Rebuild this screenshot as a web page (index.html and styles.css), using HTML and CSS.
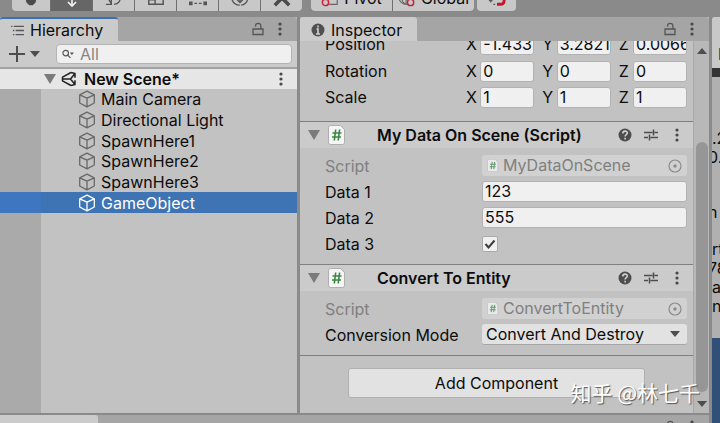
FILE: index.html
```
<!DOCTYPE html>
<html lang="en">
<head>
<meta charset="utf-8">
<title>Editor</title>
<link rel="stylesheet" href="styles.css">
</head>
<body>
<svg class="defs" aria-hidden="true">
  <symbol id="cube" viewBox="0 0 18 18"><path d="M9 1.2 16.3 4.8V13L9 16.8 1.700 13V4.800ZM1.700 4.800 9 8.200 16.300 4.800M9 8.200V16.800" fill="none" stroke="currentColor" stroke-width="1.300" stroke-linejoin="round"/></symbol>
  <symbol id="lock" viewBox="0 0 14 14"><path d="M2 7h10v5.500H2zM4.500 4.500V4a2.700 2.700 0 0 1 5.400 0v3" fill="none" stroke="currentColor" stroke-width="1.300"/></symbol>
  <symbol id="dots" viewBox="0 0 6 14"><g fill="currentColor"><circle cx="3" cy="2" r="1.600"/><circle cx="3" cy="7" r="1.600"/><circle cx="3" cy="12" r="1.600"/></g></symbol>
  <symbol id="fold" viewBox="0 0 12 10"><path d="M0 0h12L6 10z" fill="currentColor"/></symbol>
  <symbol id="down" viewBox="0 0 10 6"><path d="M0 0h10L5 6z" fill="currentColor"/></symbol>
  <symbol id="script" viewBox="0 0 18 20"><path d="M2.500.5h10l4 4v13a2 2 0 0 1-2 2h-12a2 2 0 0 1-2-2v-15a2 2 0 0 1 2-2z" fill="#f4f5f4" stroke="#a2a2a2" stroke-width=".8"/><path d="M7.700 4.500 6.300 15.500M11.600 4.500l-1.400 11M4.500 8h9M4 12h9" fill="none" stroke="#3b8546" stroke-width="1.600"/></symbol>
  <symbol id="help" viewBox="0 0 14 14"><circle cx="7" cy="7" r="6.500" fill="#4d4d4d"/><path d="M4.800 5.500c0-3.200 4.600-3 4.600-.4 0 1.500-2.300 1.500-2.300 3.300M7.100 9.700v1.700" fill="none" stroke="#d0d0d0" stroke-width="1.600"/></symbol>
  <symbol id="preset" viewBox="0 0 14 14"><path d="M0 4.500h8.500M10.500 4.500H14M0 9.500h4M6.500 9.500H14M9.500 1.500v6M5.500 6.500v6" fill="none" stroke="#4d4d4d" stroke-width="1.500"/></symbol>
  <symbol id="target" viewBox="0 0 14 14"><circle cx="7" cy="7" r="6" fill="none" stroke="#8c8c8c" stroke-width="1.200"/><circle cx="7" cy="7" r="1.700" fill="#8c8c8c"/></symbol>
</svg>

<header class="toolbar">
  <div class="group tools">
    <button aria-label="Hand"><svg viewBox="0 0 20 20"><path d="M3 8h14l-2 7-3 3H8l-3-3z" fill="#4b4b4b"/></svg></button>
    <button class="on" aria-label="Move"><svg viewBox="0 0 20 20"><path d="M10 1v17M5.500 14.500 10 19l4.500-4.500M1 10h18" fill="none" stroke="#f2f2f2" stroke-width="1.800"/></svg></button>
    <button aria-label="Rotate"><svg viewBox="0 0 20 20"><path d="M4 10c0 4 3 4 3 7H1M7 17v-6M16 8c2 5-1 9-6 9" fill="none" stroke="#555" stroke-width="1.500"/></svg></button>
    <button aria-label="Scale"><svg viewBox="0 0 20 20"><path d="M2 2h16v15H2zM2 12h7v5" fill="none" stroke="#555" stroke-width="1.600"/></svg></button>
    <button aria-label="Rect"><svg viewBox="0 0 20 20"><path d="M2 3v9M18 3v9M6 16h8" fill="none" stroke="#555" stroke-width="1.400" stroke-dasharray="3 2"/><path d="M0 14h4v4H0zM16 14h4v4h-4z" fill="#555"/></svg></button>
    <button aria-label="Transform"><svg viewBox="0 0 20 20"><path d="M1 11c1 4 4 7 9 7s8-3 9-8M10 4v11M6.500 11.500 10 15l3.500-3.500" fill="none" stroke="#555" stroke-width="1.500" stroke-dasharray="12 1.500"/></svg></button>
    <button aria-label="Custom"><svg viewBox="0 0 20 20"><path d="m2 18 8-8M10 10l8 8" fill="none" stroke="#4b4b4b" stroke-width="4"/></svg></button>
  </div>
  <div class="group modes">
    <button><svg viewBox="0 0 20 20"><path d="M6 3h12v14H9" fill="none" stroke="#666" stroke-width="1.300"/><circle cx="5" cy="15" r="3.500" fill="none" stroke="#c8233a" stroke-width="1.600"/></svg>Pivot</button>
    <button><svg viewBox="0 0 20 20"><circle cx="9" cy="9" r="8" fill="none" stroke="#666" stroke-width="1.300"/><path d="M1 11h17M9 1v16M5 2c-3 5-1 12 3 15" fill="none" stroke="#666" stroke-width="1.200"/><circle cx="14" cy="15" r="3.500" fill="#c8c8c8" stroke="#c8233a" stroke-width="1.600"/></svg>Global</button>
  </div>
  <div class="group snap">
    <button aria-label="Snap"><svg viewBox="0 0 20 20"><path d="M10 17h4q4 0 4-5V8" fill="none" stroke="#c8142e" stroke-width="3.200"/><path d="M1 13h4M3 11v4M6 17h2" stroke="#555" stroke-width="1.300"/></svg></button>
  </div>
</header>

<div class="workspace">
  <div class="docks">
    <main class="main">
      <section class="panel hierarchy">
        <div class="tabs">
          <h2 class="tab focus"><svg class="list" viewBox="0 0 14 12"><path d="M3 1.500h11M5 6h9M5 10.500h9M0 1.500h1.500M2 6h1.500M2 10.500h1.500" stroke="#555" stroke-width="1.400"/></svg>Hierarchy</h2>
          <svg class="i14"><use href="#lock"/></svg><svg class="dots"><use href="#dots"/></svg>
        </div>
        <div class="filter">
          <button class="add" aria-label="Create"><svg class="plus" viewBox="0 0 16 16"><path d="M8 0v16M0 8h16" stroke="#4d4d4d" stroke-width="2"/></svg><svg class="down"><use href="#down"/></svg></button>
          <label class="search"><svg viewBox="0 0 13 10"><circle cx="4" cy="4" r="3" fill="none" stroke="#555" stroke-width="1.300"/><path d="m6.200 6.200 3 3" stroke="#555" stroke-width="1.300"/><path d="M8.500 3.500H13L10.700 6z" fill="#555"/></svg><input type="text" placeholder="All" aria-label="Search"></label>
        </div>
        <div class="scene">
          <svg class="fold"><use href="#fold"/></svg>
          <svg class="unity" viewBox="0 0 16 16"><path d="M10 1.500 1.500 6.200v3.600l8.500 4.700M10 1.500l4 1v4.300M10 14.500l4-1V9.200M14 2.500 9.500 8l4.500 5.500M1.500 8h8" fill="none" stroke="#222" stroke-width="1.500" stroke-linejoin="round"/></svg>
          <strong>New Scene*</strong>
          <svg class="dots"><use href="#dots"/></svg>
        </div>
        <ul class="tree">
          <li><svg><use href="#cube"/></svg>Main Camera</li>
          <li><svg><use href="#cube"/></svg>Directional Light</li>
          <li><svg><use href="#cube"/></svg>SpawnHere1</li>
          <li><svg><use href="#cube"/></svg>SpawnHere2</li>
          <li><svg><use href="#cube"/></svg>SpawnHere3</li>
          <li class="selected"><svg><use href="#cube"/></svg>GameObject</li>
        </ul>
        <div class="gutter"></div>
      </section>

      <section class="panel inspector">
        <div class="tabs">
          <h2 class="tab"><svg class="i14" viewBox="0 0 14 14"><circle cx="7" cy="7" r="6.500" fill="#505050"/><path d="M7 2.500v2M5.500 6H7v5M5 11h4" fill="none" stroke="#d0d0d0" stroke-width="1.600"/></svg>Inspector</h2>
          <svg class="i14"><use href="#lock"/></svg><svg class="dots"><use href="#dots"/></svg>
        </div>
        <div class="view">
          <div class="content">
            <div class="transform">
              <div class="vector cut"><span>Position</span><label>X<input type="text" value="-1.433"></label><label>Y<input type="text" value="3.2821"></label><label>Z<input type="text" value="0.0066"></label></div>
              <div class="vector"><span>Rotation</span><label>X<input type="text" value="0"></label><label>Y<input type="text" value="0"></label><label>Z<input type="text" value="0"></label></div>
              <div class="vector"><span>Scale</span><label>X<input type="text" value="1"></label><label>Y<input type="text" value="1"></label><label>Z<input type="text" value="1"></label></div>
            </div>

            <div class="title"><svg class="fold"><use href="#fold"/></svg><svg class="script"><use href="#script"/></svg><h3>My Data On Scene (Script)</h3><svg class="i14"><use href="#help"/></svg><svg class="i14"><use href="#preset"/></svg><svg class="dots"><use href="#dots"/></svg></div>
            <div class="fields">
              <div class="row off"><label for="s1">Script</label><span class="object"><svg class="mini" viewBox="0 0 18 20"><use href="#script"/></svg><input id="s1" type="text" value="MyDataOnScene" disabled><svg class="i14"><use href="#target"/></svg></span></div>
              <div class="row"><label for="d1">Data 1</label><input id="d1" type="text" value="123"></div>
              <div class="row"><label for="d2">Data 2</label><input id="d2" type="text" value="555"></div>
              <div class="row"><label for="d3">Data 3</label><span class="check"><input id="d3" type="checkbox" checked><svg viewBox="0 0 16 16"><path d="m3.500 8 3 3.500 6-7" fill="none" stroke="#3c3c3c" stroke-width="2"/></svg></span></div>
            </div>

            <div class="title"><svg class="fold"><use href="#fold"/></svg><svg class="script"><use href="#script"/></svg><h3>Convert To Entity</h3><svg class="i14"><use href="#help"/></svg><svg class="i14"><use href="#preset"/></svg><svg class="dots"><use href="#dots"/></svg></div>
            <div class="fields">
              <div class="row off"><label for="s2">Script</label><span class="object"><svg class="mini" viewBox="0 0 18 20"><use href="#script"/></svg><input id="s2" type="text" value="ConvertToEntity" disabled><svg class="i14"><use href="#target"/></svg></span></div>
              <div class="row"><label for="cm">Conversion Mode</label><span class="pick"><select id="cm"><option>Convert And Destroy</option></select><svg class="down"><use href="#down"/></svg></span></div>
            </div>
            <div class="actions"><button>Add Component</button></div>
          </div>
          <div class="scrollbar"><svg class="down up"><use href="#down"/></svg><div class="thumb"></div><svg class="down"><use href="#down"/></svg></div>
        </div>
      </section>
    </main>
    <footer class="bottom"><div class="bottom-tab"></div><svg class="i14"><use href="#lock"/></svg><svg class="dots"><use href="#dots"/></svg></footer>
  </div>
  <aside class="side">
    <div class="side-tab">I</div>
    <div class="side-bar"></div>
    <div class="side-text"><p>.2</p><p class="back">0.</p><p class="break back">n :</p><p class="break">rt</p><p class="back">78</p><p>a</p><p>n</p></div>
    <div class="side-view"></div>
  </aside>
</div>
<div class="watermark" lang="zh">知乎 @林七千</div>
</body>
</html>
```
FILE: styles.css
```
* { box-sizing: border-box; }
body {
  margin: 0;
  height: 100vh;
  display: flex;
  flex-direction: column;
  overflow: hidden;
  background: #8a8a8a;
  color: #0c0c0c;
  font: 16px/20px Inter, "Noto Sans CJK SC", sans-serif;
}
svg { display: block; flex: none; overflow: visible; }
button, input, select { font: inherit; color: inherit; border: 0; margin: 0; padding: 0; background: none; }
h2, h3, ul, p { margin: 0; padding: 0; font: inherit; }
.defs { position: absolute; width: 0; height: 0; }

.i14, .dots { width: 14px; height: 14px; color: #555; }
.dots { color: #484848; }
.down { width: 10px; height: 6px; color: #4d4d4d; }
.fold { width: 12px; height: 10px; color: #7b7b7b; }

.toolbar {
  height: 17px;
  display: flex;
  align-items: flex-end;
  padding: 0 12px 6px;
}
.group { display: flex; gap: 1px; border-radius: 4px; overflow: hidden; background: #707070; }
.group button { height: 26px; display: flex; align-items: center; justify-content: center; gap: 5px; background: #c8c8c8; }
.group button.on { background: #666; }
.group svg { width: 18px; height: 18px; }
.tools button { width: 41px; }
.tools { margin-right: 9px; }
.tools button:first-child { width: 38px; }
.modes { margin-right: 3px; }
.modes button { width: 81px; }
.snap button { width: 39px; }

.workspace { flex: 1; display: flex; gap: 3px; min-height: 0; }
.docks { flex: 1; display: flex; flex-direction: column; gap: 2px; min-width: 0; }
.main { flex: 1; display: grid; grid-template-columns: 297fr 409fr; gap: 3px; min-height: 0; }
.panel { display: flex; flex-direction: column; min-width: 0; min-height: 0; background: #c2c2c2; overflow: hidden; }

.tabs { flex: none; height: 24px; display: flex; align-items: center; gap: 8px; padding-right: 10px; background: #a5a5a5; border-radius: 0 3px 0 0; }
.tab { height: 24px; display: flex; align-items: center; gap: 6px; padding: 2px 15px 0 11px; margin-right: auto; background: #cbcbcb; border-radius: 3px 3px 0 0; }
.focus { border-top: 2px solid #3a72b0; padding-top: 0; }
.list { width: 13px; height: 11px; }
.filter { flex: none; height: 28px; display: flex; align-items: center; gap: 16px; padding: 0 5px 0 9px; background: #cbcbcb; border-bottom: 2px solid #a2a2a2; }
.add { display: flex; align-items: center; gap: 5px; }
.plus { width: 16px; height: 16px; }
.search { flex: 1; min-width: 0; height: 20px; display: flex; align-items: center; gap: 6px; padding-left: 5px; background: #f0f0f0; border: 1px solid #b4b4b4; border-radius: 4px; }
.search svg { width: 12px; height: 10px; }
.search input { flex: 1; min-width: 0; height: 18px; }
.search input::placeholder { color: #858585; }

.scene { flex: none; height: 20px; display: flex; align-items: center; gap: 5px; padding: 0 9px 0 44px; background: #e6e6e6; }
.unity { width: 16px; height: 16px; }
.scene strong { flex: 1; padding-left: 2px; font-weight: 600; }
.tree { flex: none; height: 124px; display: grid; grid-auto-rows: 1fr; list-style: none; }
.tree li { display: flex; align-items: center; gap: 5px; padding-left: 37px; border-left: 41px solid #aaa; }
.tree svg { width: 18px; height: 18px; color: #686868; }
.tree .selected { background: #3e74b4; border-color: #3e76c0; color: #fff; }
.tree .selected svg { color: #fff; }
.gutter { flex: 1; border-left: 41px solid #aaa; }

.view { flex: 1; display: flex; min-height: 0; }
.content { flex: 1; min-width: 0; }
.transform { height: 80px; display: flex; flex-direction: column; gap: 5px; overflow: hidden; }
.vector { flex: none; display: flex; gap: 8px; height: 21px; line-height: 21px; padding: 0 6px 0 25px; }
.vector.cut { height: 14px; align-items: flex-end; margin-bottom: 1px; }
.vector span { width: 133px; }
.vector label { flex: 1; display: flex; min-width: 0; }
input[type="text"] { height: 21px; line-height: 21px; }
.vector input, .row > input { padding: 0 2px; background: #f0f0f0; border: 1px solid #b2b2b2; border-radius: 3px; }
.vector input { margin-left: auto; width: 54px; padding: 0 0 0 2px; }

.title { height: 27px; display: flex; align-items: center; gap: 12px; padding: 0 9px 0 8px; border-top: 1px solid #7f7f7f; background: #cbcbcb; }
.title .fold { margin-right: -4px; }
.script { width: 18px; height: 20px; }
.title h3 { flex: 1; padding-left: 19px; font-weight: 600; }
.fields { display: grid; gap: 5px; padding: 7px 6px 10px 25px; }
.row { display: grid; grid-template-columns: minmax(0, 157fr) minmax(0, 205fr); height: 21px; align-items: center; }
.row > input { width: 100%; }
.off label, .off input { color: #808080; }
.object, .pick { display: flex; align-items: center; height: 21px; gap: 4px; padding: 0 5px; background: #d1d1d1; border-radius: 3px; }
.object input { flex: 1; min-width: 0; }
.mini { width: 12px; height: 13px; opacity: .7; }
.pick { padding: 0 7px 0 4px; background: #e2e2e2; border-bottom: 1px solid #a6a6a6; }
.pick select { flex: 1; min-width: 0; appearance: none; }
.check { display: grid; width: 16px; height: 16px; }
.check input { grid-area: 1 / 1; appearance: none; background: #f0f0f0; border: 1px solid #aaa; border-radius: 2px; }
.check svg { grid-area: 1 / 1; pointer-events: none; }
.actions { padding: 12px 48px; border-top: 1px solid #7f7f7f; }
.actions button { width: 100%; height: 30px; background: #e2e2e2; border: 1px solid #b0b0b0; border-radius: 3px; }
.scrollbar { width: 16px; display: flex; flex-direction: column; align-items: center; padding: 7px 1px 6px; background: #b8b8b8; border-left: 1px solid #a8a8a8; }
.up { transform: scaleY(-1); }
.thumb { flex: 1; width: 12px; margin: 88px 0 9px; border-radius: 6px; background: #969696; }

.bottom { height: 8px; display: flex; gap: 8px; padding: 0 10px 0 0; background: #a5a5a5; overflow: hidden; }
.bottom-tab { width: 98px; margin-right: auto; background: #cbcbcb; border-radius: 0 3px 0 0; }
.bottom svg { margin-top: 5px; }

.side { width: 8px; display: flex; flex-direction: column; overflow: hidden; white-space: nowrap; background: #b0b0b0; border-radius: 3px 0 0 0; }
.side-tab { height: 51px; padding: 27px 0 0 6px; background: #c8c8c8; }
.side-bar { height: 9px; background: #333; }
.side-text { flex: 1; padding-top: 52px; line-height: 19px; }
.back { margin-left: -4px; }
.break { margin-top: 36px; }
.break + .break { margin-top: 18px; }
.side-view { height: 85px; background: #305078; }

.watermark { position: absolute; right: 20px; bottom: 17px; font: 21px/28px "Noto Sans CJK SC", sans-serif; color: #fff; text-shadow: 1px 1px 1px #555; }
```
